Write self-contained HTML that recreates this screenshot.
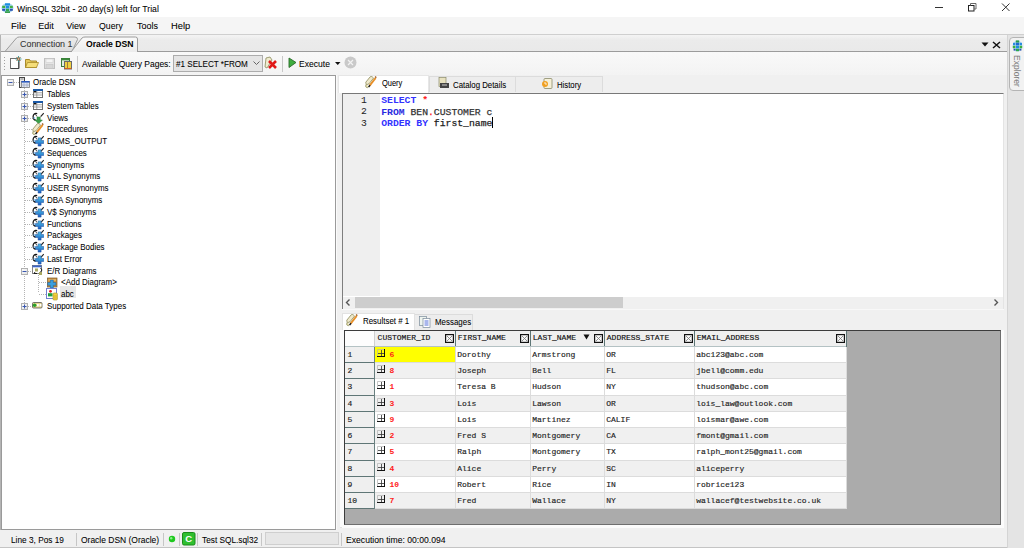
<!DOCTYPE html>
<html><head><meta charset="utf-8">
<style>
*{box-sizing:border-box;margin:0;padding:0}
html,body{width:1024px;height:548px;overflow:hidden;background:#f0f0f0;font-family:"Liberation Sans",sans-serif;color:#000;position:relative}
.a{position:absolute;display:block}
.t{position:absolute;white-space:pre}
</style></head><body>
<div class="a" style="left:0px;top:0px;width:1024px;height:17px;background:#fff"></div>
<div class="a" style="left:0px;top:17px;width:1024px;height:17px;background:#f5f5f5"></div>
<div class="a" style="left:0px;top:34px;width:1024px;height:1px;background:#cfcfcf"></div>
<div class="a" style="left:0px;top:35px;width:1007px;height:17px;background:linear-gradient(#f4f4f4,#ebebeb 30%,#e9e9e9)"></div>
<div class="a" style="left:0px;top:35px;width:1px;height:495px;background:#b4b4b4"></div>
<div class="a" style="left:1px;top:52px;width:1006px;height:23px;background:linear-gradient(#f9f9f9,#f3f3f3)"></div>
<div class="a" style="left:1007px;top:35px;width:17px;height:513px;background:#e4e4e4;border-left:1px solid #d4d4d4"></div>
<div class="a" style="left:1px;top:75px;width:335px;height:455px;background:#fff;border:1px solid #9a9a9a;border-left-width:1px"></div>
<div class="a" style="left:336px;top:75px;width:671px;height:455px;background:#f0f0f0"></div>
<div class="a" style="left:0px;top:530px;width:1007px;height:18px;background:#f0f0f0;border-bottom:1px solid #c4c4c4"></div>
<svg class="a" style="left:1px;top:3px" width="13" height="10" viewBox="0 0 13 10"><ellipse cx="6.5" cy="5" rx="6" ry="4.8" fill="#a8d4f0"/><rect x="4" y="0.3" width="5" height="2.2" fill="#1e8fe0"/><rect x="1.2" y="2.8" width="3" height="2.2" fill="#42b042"/><rect x="5" y="2.8" width="3" height="2.6" fill="#1e8fe0"/><rect x="8.8" y="2.8" width="3" height="2.2" fill="#42b042"/><rect x="1.2" y="5.8" width="3" height="2" fill="#2a52b0"/><rect x="5" y="5.8" width="3" height="2.2" fill="#2ea84a"/><rect x="8.8" y="5.8" width="3" height="2" fill="#2a52b0"/><rect x="4" y="8.3" width="5" height="1.6" fill="#2a9a40"/></svg>
<div class="t" style="left:17.22px;top:3px;font-size:9px;line-height:12px;color:#000;font-weight:normal;font-family:'Liberation Sans';transform:scaleX(0.96);transform-origin:0 0;-webkit-text-stroke:0.06px #000;">WinSQL 32bit - 20 day(s) left for Trial</div>
<div class="a" style="left:935px;top:7px;width:8px;height:1px;background:#333"></div>
<svg class="a" style="left:967px;top:2px" width="11" height="10" viewBox="0 0 11 10"><rect x="1.5" y="3.5" width="5.5" height="5.5" fill="none" stroke="#222" stroke-width="1"/><path d="M3.5 3.5V1.5h5.5v5.5h-2" fill="none" stroke="#666" stroke-width="1"/></svg>
<svg class="a" style="left:1001px;top:3px" width="10" height="9" viewBox="0 0 10 9"><path d="M1 0.5L8.5 8M8.5 0.5L1 8" stroke="#333" stroke-width="1"/></svg>
<div class="t" style="left:10.96px;top:20px;font-size:9px;line-height:12px;color:#000;font-weight:normal;font-family:'Liberation Sans';transform:scaleX(1.06);transform-origin:0 0;-webkit-text-stroke:0.06px #000;">File</div>
<div class="t" style="left:38.30px;top:20px;font-size:9px;line-height:12px;color:#000;font-weight:normal;font-family:'Liberation Sans';-webkit-text-stroke:0.06px #000;">Edit</div>
<div class="t" style="left:66.20px;top:20px;font-size:9px;line-height:12px;color:#000;font-weight:normal;font-family:'Liberation Sans';-webkit-text-stroke:0.06px #000;">View</div>
<div class="t" style="left:99.02px;top:20px;font-size:9px;line-height:12px;color:#000;font-weight:normal;font-family:'Liberation Sans';transform:scaleX(0.97);transform-origin:0 0;-webkit-text-stroke:0.06px #000;">Query</div>
<div class="t" style="left:136.90px;top:20px;font-size:9px;line-height:12px;color:#000;font-weight:normal;font-family:'Liberation Sans';-webkit-text-stroke:0.06px #000;">Tools</div>
<div class="t" style="left:170.98px;top:20px;font-size:9px;line-height:12px;color:#000;font-weight:normal;font-family:'Liberation Sans';transform:scaleX(1.04);transform-origin:0 0;-webkit-text-stroke:0.06px #000;">Help</div>
<svg class="a" style="left:0px;top:35px" width="145" height="17" viewBox="0 0 145 17"><defs><linearGradient id="g1" x1="0" y1="0" x2="0" y2="1"><stop offset="0" stop-color="#ececec"/><stop offset="1" stop-color="#dcdcdc"/></linearGradient><linearGradient id="g2" x1="0" y1="0" x2="0" y2="1"><stop offset="0" stop-color="#fafafa"/><stop offset="1" stop-color="#ececec"/></linearGradient></defs><path d="M5 16.5 L16.5 3 Q17.5 2 19.5 2 L75 2 Q77.5 2 77.5 4.5 L72 16.5 Z" fill="url(#g1)" stroke="#9c9c9c" stroke-width="1"/><path d="M71 17 L82 3 Q83 2 85 2 L135.5 2 Q137.5 2 137.5 4 L137.5 17" fill="url(#g2)" stroke="#9c9c9c" stroke-width="1"/></svg>
<div class="a" style="left:1px;top:51px;width:71px;height:1px;background:#9c9c9c"></div>
<div class="a" style="left:138px;top:51px;width:869px;height:1px;background:#9c9c9c"></div>
<div class="t" style="left:20.21px;top:38px;font-size:9px;line-height:12px;color:#333;font-weight:normal;font-family:'Liberation Sans';transform:scaleX(0.99);transform-origin:0 0;-webkit-text-stroke:0.06px #333;">Connection 1</div>
<div class="t" style="left:86.22px;top:38px;font-size:9px;line-height:12px;color:#000;font-weight:bold;font-family:'Liberation Sans';transform:scaleX(0.96);transform-origin:0 0;">Oracle DSN</div>
<svg class="a" style="left:981px;top:42px" width="8" height="5" viewBox="0 0 8 5"><path d="M0.5 0.5h7l-3.5 4z" fill="#111"/></svg>
<svg class="a" style="left:992px;top:41px" width="9" height="8" viewBox="0 0 9 8"><path d="M1 1L8 7M8 1L1 7" stroke="#111" stroke-width="1.5"/></svg>
<svg class="a" style="left:1008px;top:37px" width="16" height="54" viewBox="0 0 16 54"><path d="M16 0.5H5Q1.5 0.5 1.5 4V50Q1.5 53.5 5 53.5H16" fill="#f2f2f2" stroke="#b4b4b4"/></svg>
<svg class="a" style="left:1012px;top:40px" width="11" height="12" viewBox="0 0 11 12"><ellipse cx="5.5" cy="6" rx="4.8" ry="5.6" fill="#b8dcf0"/><rect x="3.8" y="0.4" width="3.4" height="2.2" fill="#2a9a50"/><rect x="1" y="2.8" width="2.4" height="2.4" fill="#2a8ae0"/><rect x="4" y="2.8" width="3" height="2.6" fill="#1e6ad0"/><rect x="7.6" y="2.8" width="2.4" height="2.4" fill="#2a8ae0"/><rect x="0.8" y="5.8" width="2.6" height="2.4" fill="#3ab040"/><rect x="4" y="5.8" width="3" height="2.6" fill="#1e8fe0"/><rect x="7.6" y="5.8" width="2.6" height="2.4" fill="#3ab040"/><rect x="1.6" y="8.8" width="2" height="1.8" fill="#2a52b0"/><rect x="4" y="8.8" width="3" height="2.4" fill="#2ea84a"/><rect x="7.4" y="8.8" width="2" height="1.8" fill="#2a52b0"/></svg>
<div class="t" style="left:1022px;top:55px;font-size:9px;line-height:10px;color:#7a7a7a;transform-origin:0 0;transform:rotate(90deg) scaleX(0.95)">Explorer</div>
<div class="a" style="left:4px;top:57px;width:1px;height:1px;background:#a0a0a0"></div>
<div class="a" style="left:4px;top:60px;width:1px;height:1px;background:#a0a0a0"></div>
<div class="a" style="left:4px;top:63px;width:1px;height:1px;background:#a0a0a0"></div>
<div class="a" style="left:4px;top:66px;width:1px;height:1px;background:#a0a0a0"></div>
<div class="a" style="left:4px;top:69px;width:1px;height:1px;background:#a0a0a0"></div>
<svg class="a" style="left:9px;top:55px" width="14" height="15" viewBox="0 0 14 15"><rect x="1.5" y="3.5" width="8" height="10" fill="#fff" stroke="#707070"/><path d="M2 13.5h8v-9" fill="none" stroke="#444" stroke-width="1"/><path d="M9.5 1v6M6.5 4h6" stroke="#2a9a9a" stroke-width="0.9"/><path d="M7.5 2l4 4M11.5 2l-4 4" stroke="#6a4a2a" stroke-width="0.9"/><circle cx="9.5" cy="4" r="1.4" fill="#a07040"/><circle cx="9.5" cy="4" r="0.6" fill="#fff"/></svg>
<svg class="a" style="left:25px;top:58px" width="14" height="10" viewBox="0 0 14 10"><path d="M0.5 1.5h4l1 1.5h6v6.5h-11z" fill="#e6c85a" stroke="#a88a2a"/><path d="M2.5 4.5h11l-2 5h-11z" fill="#f5de7a" stroke="#a88a2a" stroke-width="0.8"/></svg>
<svg class="a" style="left:44px;top:58px" width="11" height="11" viewBox="0 0 11 11"><rect x="0.5" y="0.5" width="10" height="10" fill="#e4e4e4" stroke="#c0c0c0"/><rect x="2" y="1" width="7" height="3.5" fill="#f4f4f4" stroke="#d0d0d0" stroke-width="0.6"/><rect x="2" y="6.5" width="7" height="4" fill="#d6d6d6" stroke="#c4c4c4" stroke-width="0.6"/></svg>
<svg class="a" style="left:60px;top:57px" width="13" height="13" viewBox="0 0 13 13"><rect x="1.5" y="1.5" width="8" height="8" fill="#dfeedc" stroke="#3a7a3a"/><rect x="1.5" y="1.5" width="8" height="1.8" fill="#3a8a3a"/><rect x="4.5" y="4.5" width="7" height="7.5" fill="#f0d040" stroke="#6a6a6a"/><path d="M7.5 5v7" stroke="#8a6a3a" stroke-width="0.8"/><rect x="4.5" y="11" width="7" height="1" fill="#d06020"/></svg>
<div class="a" style="left:77px;top:56px;width:1px;height:16px;background:#c8c8c8"></div>
<div class="t" style="left:82.03px;top:58px;font-size:9px;line-height:12px;color:#000;font-weight:normal;font-family:'Liberation Sans';transform:scaleX(0.945);transform-origin:0 0;-webkit-text-stroke:0.06px #000;">Available Query Pages:</div>
<div class="a" style="left:173px;top:55px;width:90px;height:17px;background:#e5e5e5;border:1px solid #acacac"></div>
<div class="t" style="left:175.66px;top:58px;font-size:9px;line-height:12px;color:#000;font-weight:normal;font-family:'Liberation Sans';transform:scaleX(0.9);transform-origin:0 0;-webkit-text-stroke:0.06px #000;">#1 SELECT *FROM</div>
<svg class="a" style="left:253px;top:61px" width="7" height="5" viewBox="0 0 7 5"><path d="M0.5 0.5L3.5 3.5L6.5 0.5" fill="none" stroke="#666" stroke-width="1"/></svg>
<svg class="a" style="left:264px;top:56px" width="14" height="13" viewBox="0 0 14 13"><path d="M2 2l4 -1l2 3l-5 8l-2 -1z" fill="#f0ecd0" stroke="#8a8a5a" stroke-width="0.8"/><path d="M5 5l7 7M12 5l-7 7" stroke="#e01818" stroke-width="2.6"/></svg>
<div class="a" style="left:282px;top:56px;width:1px;height:16px;background:#c8c8c8"></div>
<svg class="a" style="left:288px;top:57px" width="9" height="12" viewBox="0 0 9 12"><path d="M1 1L8 5.5L1 10.5Z" fill="#3fae3f" stroke="#2a6a2a" stroke-width="0.9"/></svg>
<div class="t" style="left:299.23px;top:58px;font-size:9px;line-height:12px;color:#000;font-weight:normal;font-family:'Liberation Sans';transform:scaleX(0.95);transform-origin:0 0;-webkit-text-stroke:0.06px #000;">Execute</div>
<svg class="a" style="left:335px;top:62px" width="6" height="4" viewBox="0 0 6 4"><path d="M0 0h5.5l-2.75 3z" fill="#111"/></svg>
<svg class="a" style="left:344px;top:56px" width="13" height="13" viewBox="0 0 13 13"><circle cx="6.5" cy="6.5" r="6" fill="#c9c9c9"/><path d="M4 4l5 5M9 4l-5 5" stroke="#f2f2f2" stroke-width="1.2"/></svg>
<div class="a" style="left:24px;top:88px;width:1px;height:217px;background:repeating-linear-gradient(180deg,#b4b4b4 0 1px,transparent 1px 2px)"></div>
<div class="a" style="left:38px;top:275px;width:1px;height:18px;background:repeating-linear-gradient(180deg,#b4b4b4 0 1px,transparent 1px 2px)"></div>
<svg class="a" style="left:7px;top:79px" width="7" height="7" viewBox="0 0 7 7"><defs><linearGradient id="bx" x1="0" y1="0" x2="1" y2="1"><stop offset="0" stop-color="#fdfdfd"/><stop offset="1" stop-color="#e2e2e2"/></linearGradient></defs><rect x="0.5" y="0.5" width="6" height="6" fill="url(#bx)" stroke="#b0b0b0"/><path d="M1.5 3.5h4" stroke="#3a58b0" stroke-width="1"/></svg>
<div class="a" style="left:14px;top:82px;width:5px;height:1px;background:repeating-linear-gradient(90deg,#b4b4b4 0 1px,transparent 1px 2px)"></div>
<svg class="a" style="left:19px;top:77px" width="11" height="12" viewBox="0 0 11 12"><rect x="0.5" y="0.5" width="5" height="10" fill="#e8e8e8" stroke="#444" stroke-width="1"/><rect x="1.5" y="1.5" width="3" height="1" fill="#888"/><rect x="2.5" y="4.5" width="8" height="6" fill="#dfe6f2" stroke="#777" stroke-width="0.8"/><rect x="2.5" y="4" width="8" height="1.6" fill="#2a58c0"/><path d="M2.5 8h8M5 5.5v5M8 5.5v5" stroke="#98a0c0" stroke-width="0.7"/></svg>
<div class="t" style="left:33.27px;top:76px;font-size:9px;line-height:12px;color:#000;font-weight:normal;font-family:'Liberation Sans';transform:scaleX(0.885);transform-origin:0 0;-webkit-text-stroke:0.06px #000;">Oracle DSN</div>
<svg class="a" style="left:21px;top:91px" width="7" height="7" viewBox="0 0 7 7"><defs><linearGradient id="bx" x1="0" y1="0" x2="1" y2="1"><stop offset="0" stop-color="#fdfdfd"/><stop offset="1" stop-color="#e2e2e2"/></linearGradient></defs><rect x="0.5" y="0.5" width="6" height="6" fill="url(#bx)" stroke="#b0b0b0"/><path d="M1.5 3.5h4" stroke="#3a58b0" stroke-width="1"/><path d="M3.5 1.5v4" stroke="#3a58b0" stroke-width="1"/></svg>
<div class="a" style="left:28px;top:94px;width:5px;height:1px;background:repeating-linear-gradient(90deg,#b4b4b4 0 1px,transparent 1px 2px)"></div>
<svg class="a" style="left:32px;top:88px" width="12" height="13" viewBox="0 0 12 13"><g transform="translate(1,1)"><rect x="0.5" y="0.5" width="9" height="8" fill="#fff" stroke="#707070" stroke-width="1"/><rect x="0" y="0" width="10" height="2" fill="#1c5aa8"/><rect x="1" y="2" width="2.5" height="1.5" fill="#111"/><path d="M1 3.8h8M1 6h8M3.8 2v6" stroke="#8a8a8a" stroke-width="0.8"/></g></svg>
<div class="t" style="left:47.47px;top:88px;font-size:9px;line-height:12px;color:#000;font-weight:normal;font-family:'Liberation Sans';transform:scaleX(0.885);transform-origin:0 0;-webkit-text-stroke:0.06px #000;">Tables</div>
<svg class="a" style="left:21px;top:103px" width="7" height="7" viewBox="0 0 7 7"><defs><linearGradient id="bx" x1="0" y1="0" x2="1" y2="1"><stop offset="0" stop-color="#fdfdfd"/><stop offset="1" stop-color="#e2e2e2"/></linearGradient></defs><rect x="0.5" y="0.5" width="6" height="6" fill="url(#bx)" stroke="#b0b0b0"/><path d="M1.5 3.5h4" stroke="#3a58b0" stroke-width="1"/><path d="M3.5 1.5v4" stroke="#3a58b0" stroke-width="1"/></svg>
<div class="a" style="left:28px;top:106px;width:5px;height:1px;background:repeating-linear-gradient(90deg,#b4b4b4 0 1px,transparent 1px 2px)"></div>
<svg class="a" style="left:32px;top:100px" width="12" height="13" viewBox="0 0 12 13"><g transform="translate(1,1)"><rect x="0.5" y="0.5" width="9" height="8" fill="#fff" stroke="#707070" stroke-width="1"/><rect x="0" y="0" width="10" height="2" fill="#1c5aa8"/><rect x="1" y="2" width="2.5" height="1.5" fill="#111"/><path d="M1 3.8h8M1 6h8M3.8 2v6" stroke="#8a8a8a" stroke-width="0.8"/></g></svg>
<div class="t" style="left:47.47px;top:100px;font-size:9px;line-height:12px;color:#000;font-weight:normal;font-family:'Liberation Sans';transform:scaleX(0.885);transform-origin:0 0;-webkit-text-stroke:0.06px #000;">System Tables</div>
<svg class="a" style="left:21px;top:115px" width="7" height="7" viewBox="0 0 7 7"><defs><linearGradient id="bx" x1="0" y1="0" x2="1" y2="1"><stop offset="0" stop-color="#fdfdfd"/><stop offset="1" stop-color="#e2e2e2"/></linearGradient></defs><rect x="0.5" y="0.5" width="6" height="6" fill="url(#bx)" stroke="#b0b0b0"/><path d="M1.5 3.5h4" stroke="#3a58b0" stroke-width="1"/><path d="M3.5 1.5v4" stroke="#3a58b0" stroke-width="1"/></svg>
<div class="a" style="left:28px;top:118px;width:5px;height:1px;background:repeating-linear-gradient(90deg,#b4b4b4 0 1px,transparent 1px 2px)"></div>
<svg class="a" style="left:32px;top:112px" width="12" height="13" viewBox="0 0 12 13"><path d="M5.2 1.6Q1.4 0.8 1.1 4.4Q1 7.8 3.8 8.2" fill="none" stroke="#111" stroke-width="1.2"/><path d="M2.4 2.4Q4.6 2.2 5 4.6" fill="none" stroke="#333" stroke-width="0.8"/><circle cx="2.3" cy="6" r="0.9" fill="#9ac8f0"/><path d="M11.8 1.2L8.6 4.6" stroke="#222" stroke-width="1.2"/><path d="M5 5h3.2v3h2.2l-3.8 3.8l-3.8-3.8h2.2z" fill="#3aa04a" stroke="#2a7a3a" stroke-width="0.5"/></svg>
<div class="t" style="left:47.47px;top:112px;font-size:9px;line-height:12px;color:#000;font-weight:normal;font-family:'Liberation Sans';transform:scaleX(0.885);transform-origin:0 0;-webkit-text-stroke:0.06px #000;">Views</div>
<div class="a" style="left:25px;top:129px;width:8px;height:1px;background:repeating-linear-gradient(90deg,#b4b4b4 0 1px,transparent 1px 2px)"></div>
<svg class="a" style="left:32px;top:123px" width="12" height="13" viewBox="0 0 12 13"><path d="M0.8 6.2L5.2 0.8Q6.2 0 7.2 0.8L8.6 2L4 7.8L1.2 8.8Z" fill="#efe9cc" stroke="#8c8a58" stroke-width="0.8"/><path d="M1.2 8.6L0.6 10.2Q1 11.8 2.6 11.6L3.8 10.6" fill="#e6dfb0" stroke="#8c8a58" stroke-width="0.8"/><path d="M4.6 9.6L10.6 2" stroke="#e8902a" stroke-width="2"/><path d="M10.2 1.6L11.2 0.6" stroke="#a05a20" stroke-width="1.6"/><path d="M3.6 11L5 9.2" stroke="#1a1a1a" stroke-width="1.4"/></svg>
<div class="t" style="left:47.47px;top:123px;font-size:9px;line-height:12px;color:#000;font-weight:normal;font-family:'Liberation Sans';transform:scaleX(0.885);transform-origin:0 0;-webkit-text-stroke:0.06px #000;">Procedures</div>
<div class="a" style="left:25px;top:141px;width:8px;height:1px;background:repeating-linear-gradient(90deg,#b4b4b4 0 1px,transparent 1px 2px)"></div>
<svg class="a" style="left:32px;top:135px" width="12" height="13" viewBox="0 0 12 13"><path d="M5.2 1.6Q1.4 0.8 1.1 4.4Q1 7.8 3.8 8.2" fill="none" stroke="#111" stroke-width="1.2"/><path d="M2.4 2.4Q4.6 2.2 5 4.6" fill="none" stroke="#333" stroke-width="0.8"/><circle cx="2.3" cy="6" r="0.9" fill="#9ac8f0"/><path d="M11.8 1.2L8.6 4.6" stroke="#222" stroke-width="1.2"/><defs><linearGradient id="pg" x1="0" y1="0" x2="0" y2="1"><stop offset="0" stop-color="#50c8e8"/><stop offset="1" stop-color="#1a58c0"/></linearGradient></defs><path d="M3.5 5.5h2.6v-2.6h3v2.6h2.6v3h-2.6v2.6h-3v-2.6h-2.6z" fill="url(#pg)" stroke="#1a4a9a" stroke-width="0.5"/></svg>
<div class="t" style="left:47.47px;top:135px;font-size:9px;line-height:12px;color:#000;font-weight:normal;font-family:'Liberation Sans';transform:scaleX(0.885);transform-origin:0 0;-webkit-text-stroke:0.06px #000;">DBMS_OUTPUT</div>
<div class="a" style="left:25px;top:153px;width:8px;height:1px;background:repeating-linear-gradient(90deg,#b4b4b4 0 1px,transparent 1px 2px)"></div>
<svg class="a" style="left:32px;top:147px" width="12" height="13" viewBox="0 0 12 13"><path d="M5.2 1.6Q1.4 0.8 1.1 4.4Q1 7.8 3.8 8.2" fill="none" stroke="#111" stroke-width="1.2"/><path d="M2.4 2.4Q4.6 2.2 5 4.6" fill="none" stroke="#333" stroke-width="0.8"/><circle cx="2.3" cy="6" r="0.9" fill="#9ac8f0"/><path d="M11.8 1.2L8.6 4.6" stroke="#222" stroke-width="1.2"/><defs><linearGradient id="pg" x1="0" y1="0" x2="0" y2="1"><stop offset="0" stop-color="#50c8e8"/><stop offset="1" stop-color="#1a58c0"/></linearGradient></defs><path d="M3.5 5.5h2.6v-2.6h3v2.6h2.6v3h-2.6v2.6h-3v-2.6h-2.6z" fill="url(#pg)" stroke="#1a4a9a" stroke-width="0.5"/></svg>
<div class="t" style="left:47.47px;top:147px;font-size:9px;line-height:12px;color:#000;font-weight:normal;font-family:'Liberation Sans';transform:scaleX(0.885);transform-origin:0 0;-webkit-text-stroke:0.06px #000;">Sequences</div>
<div class="a" style="left:25px;top:165px;width:8px;height:1px;background:repeating-linear-gradient(90deg,#b4b4b4 0 1px,transparent 1px 2px)"></div>
<svg class="a" style="left:32px;top:159px" width="12" height="13" viewBox="0 0 12 13"><path d="M5.2 1.6Q1.4 0.8 1.1 4.4Q1 7.8 3.8 8.2" fill="none" stroke="#111" stroke-width="1.2"/><path d="M2.4 2.4Q4.6 2.2 5 4.6" fill="none" stroke="#333" stroke-width="0.8"/><circle cx="2.3" cy="6" r="0.9" fill="#9ac8f0"/><path d="M11.8 1.2L8.6 4.6" stroke="#222" stroke-width="1.2"/><defs><linearGradient id="pg" x1="0" y1="0" x2="0" y2="1"><stop offset="0" stop-color="#50c8e8"/><stop offset="1" stop-color="#1a58c0"/></linearGradient></defs><path d="M3.5 5.5h2.6v-2.6h3v2.6h2.6v3h-2.6v2.6h-3v-2.6h-2.6z" fill="url(#pg)" stroke="#1a4a9a" stroke-width="0.5"/></svg>
<div class="t" style="left:47.47px;top:159px;font-size:9px;line-height:12px;color:#000;font-weight:normal;font-family:'Liberation Sans';transform:scaleX(0.885);transform-origin:0 0;-webkit-text-stroke:0.06px #000;">Synonyms</div>
<div class="a" style="left:25px;top:176px;width:8px;height:1px;background:repeating-linear-gradient(90deg,#b4b4b4 0 1px,transparent 1px 2px)"></div>
<svg class="a" style="left:32px;top:170px" width="12" height="13" viewBox="0 0 12 13"><path d="M5.2 1.6Q1.4 0.8 1.1 4.4Q1 7.8 3.8 8.2" fill="none" stroke="#111" stroke-width="1.2"/><path d="M2.4 2.4Q4.6 2.2 5 4.6" fill="none" stroke="#333" stroke-width="0.8"/><circle cx="2.3" cy="6" r="0.9" fill="#9ac8f0"/><path d="M11.8 1.2L8.6 4.6" stroke="#222" stroke-width="1.2"/><defs><linearGradient id="pg" x1="0" y1="0" x2="0" y2="1"><stop offset="0" stop-color="#50c8e8"/><stop offset="1" stop-color="#1a58c0"/></linearGradient></defs><path d="M3.5 5.5h2.6v-2.6h3v2.6h2.6v3h-2.6v2.6h-3v-2.6h-2.6z" fill="url(#pg)" stroke="#1a4a9a" stroke-width="0.5"/></svg>
<div class="t" style="left:47.47px;top:170px;font-size:9px;line-height:12px;color:#000;font-weight:normal;font-family:'Liberation Sans';transform:scaleX(0.885);transform-origin:0 0;-webkit-text-stroke:0.06px #000;">ALL Synonyms</div>
<div class="a" style="left:25px;top:188px;width:8px;height:1px;background:repeating-linear-gradient(90deg,#b4b4b4 0 1px,transparent 1px 2px)"></div>
<svg class="a" style="left:32px;top:182px" width="12" height="13" viewBox="0 0 12 13"><path d="M5.2 1.6Q1.4 0.8 1.1 4.4Q1 7.8 3.8 8.2" fill="none" stroke="#111" stroke-width="1.2"/><path d="M2.4 2.4Q4.6 2.2 5 4.6" fill="none" stroke="#333" stroke-width="0.8"/><circle cx="2.3" cy="6" r="0.9" fill="#9ac8f0"/><path d="M11.8 1.2L8.6 4.6" stroke="#222" stroke-width="1.2"/><defs><linearGradient id="pg" x1="0" y1="0" x2="0" y2="1"><stop offset="0" stop-color="#50c8e8"/><stop offset="1" stop-color="#1a58c0"/></linearGradient></defs><path d="M3.5 5.5h2.6v-2.6h3v2.6h2.6v3h-2.6v2.6h-3v-2.6h-2.6z" fill="url(#pg)" stroke="#1a4a9a" stroke-width="0.5"/></svg>
<div class="t" style="left:47.47px;top:182px;font-size:9px;line-height:12px;color:#000;font-weight:normal;font-family:'Liberation Sans';transform:scaleX(0.885);transform-origin:0 0;-webkit-text-stroke:0.06px #000;">USER Synonyms</div>
<div class="a" style="left:25px;top:200px;width:8px;height:1px;background:repeating-linear-gradient(90deg,#b4b4b4 0 1px,transparent 1px 2px)"></div>
<svg class="a" style="left:32px;top:194px" width="12" height="13" viewBox="0 0 12 13"><path d="M5.2 1.6Q1.4 0.8 1.1 4.4Q1 7.8 3.8 8.2" fill="none" stroke="#111" stroke-width="1.2"/><path d="M2.4 2.4Q4.6 2.2 5 4.6" fill="none" stroke="#333" stroke-width="0.8"/><circle cx="2.3" cy="6" r="0.9" fill="#9ac8f0"/><path d="M11.8 1.2L8.6 4.6" stroke="#222" stroke-width="1.2"/><defs><linearGradient id="pg" x1="0" y1="0" x2="0" y2="1"><stop offset="0" stop-color="#50c8e8"/><stop offset="1" stop-color="#1a58c0"/></linearGradient></defs><path d="M3.5 5.5h2.6v-2.6h3v2.6h2.6v3h-2.6v2.6h-3v-2.6h-2.6z" fill="url(#pg)" stroke="#1a4a9a" stroke-width="0.5"/></svg>
<div class="t" style="left:47.47px;top:194px;font-size:9px;line-height:12px;color:#000;font-weight:normal;font-family:'Liberation Sans';transform:scaleX(0.885);transform-origin:0 0;-webkit-text-stroke:0.06px #000;">DBA Synonyms</div>
<div class="a" style="left:25px;top:212px;width:8px;height:1px;background:repeating-linear-gradient(90deg,#b4b4b4 0 1px,transparent 1px 2px)"></div>
<svg class="a" style="left:32px;top:206px" width="12" height="13" viewBox="0 0 12 13"><path d="M5.2 1.6Q1.4 0.8 1.1 4.4Q1 7.8 3.8 8.2" fill="none" stroke="#111" stroke-width="1.2"/><path d="M2.4 2.4Q4.6 2.2 5 4.6" fill="none" stroke="#333" stroke-width="0.8"/><circle cx="2.3" cy="6" r="0.9" fill="#9ac8f0"/><path d="M11.8 1.2L8.6 4.6" stroke="#222" stroke-width="1.2"/><defs><linearGradient id="pg" x1="0" y1="0" x2="0" y2="1"><stop offset="0" stop-color="#50c8e8"/><stop offset="1" stop-color="#1a58c0"/></linearGradient></defs><path d="M3.5 5.5h2.6v-2.6h3v2.6h2.6v3h-2.6v2.6h-3v-2.6h-2.6z" fill="url(#pg)" stroke="#1a4a9a" stroke-width="0.5"/></svg>
<div class="t" style="left:47.47px;top:206px;font-size:9px;line-height:12px;color:#000;font-weight:normal;font-family:'Liberation Sans';transform:scaleX(0.885);transform-origin:0 0;-webkit-text-stroke:0.06px #000;">V$ Synonyms</div>
<div class="a" style="left:25px;top:224px;width:8px;height:1px;background:repeating-linear-gradient(90deg,#b4b4b4 0 1px,transparent 1px 2px)"></div>
<svg class="a" style="left:32px;top:218px" width="12" height="13" viewBox="0 0 12 13"><path d="M5.2 1.6Q1.4 0.8 1.1 4.4Q1 7.8 3.8 8.2" fill="none" stroke="#111" stroke-width="1.2"/><path d="M2.4 2.4Q4.6 2.2 5 4.6" fill="none" stroke="#333" stroke-width="0.8"/><circle cx="2.3" cy="6" r="0.9" fill="#9ac8f0"/><path d="M11.8 1.2L8.6 4.6" stroke="#222" stroke-width="1.2"/><defs><linearGradient id="pg" x1="0" y1="0" x2="0" y2="1"><stop offset="0" stop-color="#50c8e8"/><stop offset="1" stop-color="#1a58c0"/></linearGradient></defs><path d="M3.5 5.5h2.6v-2.6h3v2.6h2.6v3h-2.6v2.6h-3v-2.6h-2.6z" fill="url(#pg)" stroke="#1a4a9a" stroke-width="0.5"/></svg>
<div class="t" style="left:47.47px;top:218px;font-size:9px;line-height:12px;color:#000;font-weight:normal;font-family:'Liberation Sans';transform:scaleX(0.885);transform-origin:0 0;-webkit-text-stroke:0.06px #000;">Functions</div>
<div class="a" style="left:25px;top:235px;width:8px;height:1px;background:repeating-linear-gradient(90deg,#b4b4b4 0 1px,transparent 1px 2px)"></div>
<svg class="a" style="left:32px;top:229px" width="12" height="13" viewBox="0 0 12 13"><path d="M5.2 1.6Q1.4 0.8 1.1 4.4Q1 7.8 3.8 8.2" fill="none" stroke="#111" stroke-width="1.2"/><path d="M2.4 2.4Q4.6 2.2 5 4.6" fill="none" stroke="#333" stroke-width="0.8"/><circle cx="2.3" cy="6" r="0.9" fill="#9ac8f0"/><path d="M11.8 1.2L8.6 4.6" stroke="#222" stroke-width="1.2"/><defs><linearGradient id="pg" x1="0" y1="0" x2="0" y2="1"><stop offset="0" stop-color="#50c8e8"/><stop offset="1" stop-color="#1a58c0"/></linearGradient></defs><path d="M3.5 5.5h2.6v-2.6h3v2.6h2.6v3h-2.6v2.6h-3v-2.6h-2.6z" fill="url(#pg)" stroke="#1a4a9a" stroke-width="0.5"/></svg>
<div class="t" style="left:47.47px;top:229px;font-size:9px;line-height:12px;color:#000;font-weight:normal;font-family:'Liberation Sans';transform:scaleX(0.885);transform-origin:0 0;-webkit-text-stroke:0.06px #000;">Packages</div>
<div class="a" style="left:25px;top:247px;width:8px;height:1px;background:repeating-linear-gradient(90deg,#b4b4b4 0 1px,transparent 1px 2px)"></div>
<svg class="a" style="left:32px;top:241px" width="12" height="13" viewBox="0 0 12 13"><path d="M5.2 1.6Q1.4 0.8 1.1 4.4Q1 7.8 3.8 8.2" fill="none" stroke="#111" stroke-width="1.2"/><path d="M2.4 2.4Q4.6 2.2 5 4.6" fill="none" stroke="#333" stroke-width="0.8"/><circle cx="2.3" cy="6" r="0.9" fill="#9ac8f0"/><path d="M11.8 1.2L8.6 4.6" stroke="#222" stroke-width="1.2"/><defs><linearGradient id="pg" x1="0" y1="0" x2="0" y2="1"><stop offset="0" stop-color="#50c8e8"/><stop offset="1" stop-color="#1a58c0"/></linearGradient></defs><path d="M3.5 5.5h2.6v-2.6h3v2.6h2.6v3h-2.6v2.6h-3v-2.6h-2.6z" fill="url(#pg)" stroke="#1a4a9a" stroke-width="0.5"/></svg>
<div class="t" style="left:47.47px;top:241px;font-size:9px;line-height:12px;color:#000;font-weight:normal;font-family:'Liberation Sans';transform:scaleX(0.885);transform-origin:0 0;-webkit-text-stroke:0.06px #000;">Package Bodies</div>
<div class="a" style="left:25px;top:259px;width:8px;height:1px;background:repeating-linear-gradient(90deg,#b4b4b4 0 1px,transparent 1px 2px)"></div>
<svg class="a" style="left:32px;top:253px" width="12" height="13" viewBox="0 0 12 13"><path d="M5.2 1.6Q1.4 0.8 1.1 4.4Q1 7.8 3.8 8.2" fill="none" stroke="#111" stroke-width="1.2"/><path d="M2.4 2.4Q4.6 2.2 5 4.6" fill="none" stroke="#333" stroke-width="0.8"/><circle cx="2.3" cy="6" r="0.9" fill="#9ac8f0"/><path d="M11.8 1.2L8.6 4.6" stroke="#222" stroke-width="1.2"/><defs><linearGradient id="pg" x1="0" y1="0" x2="0" y2="1"><stop offset="0" stop-color="#50c8e8"/><stop offset="1" stop-color="#1a58c0"/></linearGradient></defs><path d="M3.5 5.5h2.6v-2.6h3v2.6h2.6v3h-2.6v2.6h-3v-2.6h-2.6z" fill="url(#pg)" stroke="#1a4a9a" stroke-width="0.5"/></svg>
<div class="t" style="left:47.47px;top:253px;font-size:9px;line-height:12px;color:#000;font-weight:normal;font-family:'Liberation Sans';transform:scaleX(0.885);transform-origin:0 0;-webkit-text-stroke:0.06px #000;">Last Error</div>
<svg class="a" style="left:21px;top:268px" width="7" height="7" viewBox="0 0 7 7"><defs><linearGradient id="bx" x1="0" y1="0" x2="1" y2="1"><stop offset="0" stop-color="#fdfdfd"/><stop offset="1" stop-color="#e2e2e2"/></linearGradient></defs><rect x="0.5" y="0.5" width="6" height="6" fill="url(#bx)" stroke="#b0b0b0"/><path d="M1.5 3.5h4" stroke="#3a58b0" stroke-width="1"/></svg>
<div class="a" style="left:28px;top:271px;width:5px;height:1px;background:repeating-linear-gradient(90deg,#b4b4b4 0 1px,transparent 1px 2px)"></div>
<svg class="a" style="left:32px;top:265px" width="12" height="13" viewBox="0 0 12 13"><rect x="0.5" y="0.5" width="9" height="8" fill="#fff" stroke="#666" stroke-width="0.8"/><rect x="0.5" y="0.5" width="9" height="1.8" fill="#3a64c8"/><rect x="3" y="3.5" width="3" height="3" fill="#a8a860"/><rect x="7" y="7" width="3" height="3" fill="#a8a860"/><path d="M8.5 3l1.5 2l-1.5 2M3 7l-1 1.5l3 0" fill="none" stroke="#111" stroke-width="0.9"/></svg>
<div class="t" style="left:47.47px;top:265px;font-size:9px;line-height:12px;color:#000;font-weight:normal;font-family:'Liberation Sans';transform:scaleX(0.885);transform-origin:0 0;-webkit-text-stroke:0.06px #000;">E/R Diagrams</div>
<div class="a" style="left:39px;top:282px;width:8px;height:1px;background:repeating-linear-gradient(90deg,#b4b4b4 0 1px,transparent 1px 2px)"></div>
<svg class="a" style="left:46px;top:276px" width="13" height="13" viewBox="0 0 13 13"><g transform="translate(0.5,1.5)"><rect x="1" y="0.5" width="9.5" height="9" fill="#c89040" stroke="#7a5a2a" stroke-width="0.7"/><rect x="2" y="1.5" width="7.5" height="2" fill="#e0b060"/><path d="M1.2 5h2.6v-2.4h3v2.4h2.6v2.8h-2.6v2.6h-3v-2.6h-2.6z" fill="#3aa0e0" stroke="#1a5a9a" stroke-width="0.5"/></g></svg>
<div class="t" style="left:60.97px;top:276px;font-size:9px;line-height:12px;color:#000;font-weight:normal;font-family:'Liberation Sans';transform:scaleX(0.885);transform-origin:0 0;-webkit-text-stroke:0.06px #000;">&lt;Add Diagram&gt;</div>
<div class="a" style="left:39px;top:294px;width:8px;height:1px;background:repeating-linear-gradient(90deg,#b4b4b4 0 1px,transparent 1px 2px)"></div>
<svg class="a" style="left:46px;top:288px" width="13" height="13" viewBox="0 0 13 13"><rect x="0.5" y="0.5" width="10" height="10" fill="#fff" stroke="#7080d0" stroke-width="1"/><circle cx="4.5" cy="3.3" r="1.4" fill="#e02020"/><rect x="2" y="5.2" width="4.5" height="3.2" fill="#20a040"/><rect x="7" y="5" width="4.4" height="7" rx="1" fill="#f2d040" stroke="#a89020" stroke-width="0.6"/><path d="M7.8 8h3M7.8 10h3" stroke="#c8a020" stroke-width="0.6"/></svg>
<div class="a" style="left:60px;top:286px;width:16px;height:12px;background:#e8e8e8"></div>
<div class="t" style="left:60.97px;top:288px;font-size:9px;line-height:12px;color:#000;font-weight:normal;font-family:'Liberation Sans';transform:scaleX(0.885);transform-origin:0 0;-webkit-text-stroke:0.06px #000;">abc</div>
<svg class="a" style="left:21px;top:303px" width="7" height="7" viewBox="0 0 7 7"><defs><linearGradient id="bx" x1="0" y1="0" x2="1" y2="1"><stop offset="0" stop-color="#fdfdfd"/><stop offset="1" stop-color="#e2e2e2"/></linearGradient></defs><rect x="0.5" y="0.5" width="6" height="6" fill="url(#bx)" stroke="#b0b0b0"/><path d="M1.5 3.5h4" stroke="#3a58b0" stroke-width="1"/><path d="M3.5 1.5v4" stroke="#3a58b0" stroke-width="1"/></svg>
<div class="a" style="left:28px;top:306px;width:5px;height:1px;background:repeating-linear-gradient(90deg,#b4b4b4 0 1px,transparent 1px 2px)"></div>
<svg class="a" style="left:32px;top:300px" width="12" height="13" viewBox="0 0 12 13"><g transform="translate(0,2)"><rect x="0.5" y="0.5" width="9.5" height="5.5" rx="1" fill="#e8d890" stroke="#555" stroke-width="0.8"/><circle cx="2.6" cy="3.2" r="1.8" fill="#2aa02a"/><rect x="5" y="2" width="1.8" height="2.4" fill="#fff"/><rect x="7.6" y="2" width="1.8" height="2.4" fill="#fff"/></g></svg>
<div class="t" style="left:47.47px;top:300px;font-size:9px;line-height:12px;color:#000;font-weight:normal;font-family:'Liberation Sans';transform:scaleX(0.885);transform-origin:0 0;-webkit-text-stroke:0.06px #000;">Supported Data Types</div>
<div class="a" style="left:338px;top:75px;width:91px;height:18px;background:#fff;border:1px solid #e6e6e6;border-bottom:none"></div>
<div class="a" style="left:429px;top:76px;width:87px;height:16px;background:#ededed;border:1px solid #dcdcdc;border-bottom:none"></div>
<div class="a" style="left:516px;top:76px;width:87px;height:16px;background:#ededed;border:1px solid #dcdcdc;border-bottom:none;border-left:none"></div>
<svg class="a" style="left:365px;top:76px" width="13" height="13" viewBox="0 0 13 13"><path d="M0.8 6.2L5.2 0.8Q6.2 0 7.2 0.8L8.6 2L4 7.8L1.2 8.8Z" fill="#efe9cc" stroke="#8c8a58" stroke-width="0.8"/><path d="M1.2 8.6L0.6 10.2Q1 11.8 2.6 11.6L3.8 10.6" fill="#e6dfb0" stroke="#8c8a58" stroke-width="0.8"/><path d="M4.6 9.6L10.6 2" stroke="#e8902a" stroke-width="2"/><path d="M10.2 1.6L11.2 0.6" stroke="#a05a20" stroke-width="1.6"/><path d="M3.6 11L5 9.2" stroke="#1a1a1a" stroke-width="1.4"/></svg>
<div class="t" style="left:381.50px;top:77px;font-size:9px;line-height:12px;color:#000;font-weight:normal;font-family:'Liberation Sans';transform:scaleX(0.83);transform-origin:0 0;-webkit-text-stroke:0.06px #000;">Query</div>
<svg class="a" style="left:438px;top:77px" width="13" height="12" viewBox="0 0 13 12"><rect x="1" y="0.5" width="7" height="9" fill="#e8e2c0" stroke="#8a8a6a" stroke-width="0.7"/><rect x="2" y="6" width="9" height="5" fill="#444"/><rect x="4" y="7.5" width="5" height="1" fill="#ccc"/></svg>
<div class="t" style="left:453.48px;top:79px;font-size:9px;line-height:12px;color:#000;font-weight:normal;font-family:'Liberation Sans';transform:scaleX(0.87);transform-origin:0 0;-webkit-text-stroke:0.06px #000;">Catalog Details</div>
<svg class="a" style="left:541px;top:78px" width="13" height="12" viewBox="0 0 13 12"><rect x="3" y="0.5" width="8" height="10" rx="1" fill="#f6f0d8" stroke="#8a8a6a" stroke-width="0.8"/><circle cx="4" cy="6" r="3" fill="#f0a020"/><path d="M4 4v2h2" stroke="#fff" stroke-width="0.8" fill="none"/></svg>
<div class="t" style="left:557.28px;top:79px;font-size:9px;line-height:12px;color:#000;font-weight:normal;font-family:'Liberation Sans';transform:scaleX(0.86);transform-origin:0 0;-webkit-text-stroke:0.06px #000;">History</div>
<div class="a" style="left:342px;top:93px;width:662px;height:216px;background:#fff;border-top:1px solid #787878;border-left:1px solid #7e7e7e;border-right:1px solid #e4e4e4"></div>
<div class="a" style="left:343px;top:94px;width:37px;height:202px;background:#efefef"></div>
<div class="t" style="left:361.00px;top:95px;font-size:9.75px;line-height:12px;color:#222;font-weight:normal;font-family:'Liberation Mono';-webkit-text-stroke:0.15px #222;-webkit-text-stroke:0">1</div>
<div class="t" style="left:361.00px;top:106px;font-size:9.75px;line-height:12px;color:#222;font-weight:normal;font-family:'Liberation Mono';-webkit-text-stroke:0.15px #222;-webkit-text-stroke:0">2</div>
<div class="t" style="left:361.00px;top:118px;font-size:9.75px;line-height:12px;color:#222;font-weight:normal;font-family:'Liberation Mono';-webkit-text-stroke:0.15px #222;-webkit-text-stroke:0">3</div>
<div class="t" style="left:381.2px;top:95px;font-size:9.75px;line-height:12px;font-family:'Liberation Mono'"><span style="color:#3333ff;font-weight:bold;-webkit-text-stroke:0px #3333ff">SELECT</span><span style="color:#000;font-weight:normal;-webkit-text-stroke:0.25px #000"> </span><span style="color:#ff2020;font-weight:bold;-webkit-text-stroke:0px #ff2020">*</span></div>
<div class="t" style="left:381.2px;top:107px;font-size:9.75px;line-height:12px;font-family:'Liberation Mono'"><span style="color:#2a2ae0;font-weight:bold;-webkit-text-stroke:0px #2a2ae0">FROM</span><span style="color:#333;font-weight:normal;-webkit-text-stroke:0.25px #333"> BEN</span><span style="color:#ff2020;font-weight:normal;-webkit-text-stroke:0.25px #ff2020">.</span><span style="color:#333;font-weight:normal;-webkit-text-stroke:0.25px #333">CUSTOMER c</span></div>
<div class="t" style="left:381.2px;top:118px;font-size:9.75px;line-height:12px;font-family:'Liberation Mono'"><span style="color:#3333ff;font-weight:bold;-webkit-text-stroke:0px #3333ff">ORDER BY</span><span style="color:#222;font-weight:normal;-webkit-text-stroke:0.25px #222"> first_name</span></div>
<div class="a" style="left:492px;top:117px;width:1px;height:11px;background:#000"></div>
<div class="a" style="left:343px;top:297px;width:660px;height:12px;background:#f0f0f0"></div>
<div class="a" style="left:342px;top:309px;width:662px;height:1px;background:#f8f8f8"></div>
<div class="a" style="left:355px;top:297px;width:268px;height:11px;background:#cdcdcd"></div>
<svg class="a" style="left:345px;top:299px" width="6" height="7" viewBox="0 0 6 7"><path d="M4.5 0.5L1.5 3.5L4.5 6.5" fill="none" stroke="#555" stroke-width="1.4"/></svg>
<svg class="a" style="left:993px;top:299px" width="6" height="7" viewBox="0 0 6 7"><path d="M1.5 0.5L4.5 3.5L1.5 6.5" fill="none" stroke="#555" stroke-width="1.4"/></svg>
<div class="a" style="left:342px;top:313px;width:73px;height:17px;background:#fff;border:1px solid #e2e2e2;border-bottom:none"></div>
<div class="a" style="left:415px;top:314px;width:58px;height:16px;background:#ededed;border:1px solid #dcdcdc;border-bottom:none;border-left:none"></div>
<svg class="a" style="left:346px;top:314px" width="13" height="13" viewBox="0 0 13 13"><path d="M0.8 6.2L5.2 0.8Q6.2 0 7.2 0.8L8.6 2L4 7.8L1.2 8.8Z" fill="#efe9cc" stroke="#8c8a58" stroke-width="0.8"/><path d="M1.2 8.6L0.6 10.2Q1 11.8 2.6 11.6L3.8 10.6" fill="#e6dfb0" stroke="#8c8a58" stroke-width="0.8"/><path d="M4.6 9.6L10.6 2" stroke="#e8902a" stroke-width="2"/><path d="M10.2 1.6L11.2 0.6" stroke="#a05a20" stroke-width="1.6"/><path d="M3.6 11L5 9.2" stroke="#1a1a1a" stroke-width="1.4"/></svg>
<div class="t" style="left:363.47px;top:315px;font-size:9px;line-height:12px;color:#000;font-weight:normal;font-family:'Liberation Sans';transform:scaleX(0.88);transform-origin:0 0;-webkit-text-stroke:0.06px #000;">Resultset # 1</div>
<svg class="a" style="left:419px;top:316px" width="12" height="12" viewBox="0 0 12 12"><rect x="0.5" y="0.5" width="7" height="9" fill="#eef4ee" stroke="#7a8a9a" stroke-width="0.7"/><rect x="4" y="2.5" width="7" height="9" fill="#fff" stroke="#7a8a9a" stroke-width="0.7"/><path d="M5.5 5h4M5.5 7h4M5.5 9h4" stroke="#2a4ad0" stroke-width="0.8"/></svg>
<div class="t" style="left:435.47px;top:316px;font-size:9px;line-height:12px;color:#000;font-weight:normal;font-family:'Liberation Sans';transform:scaleX(0.88);transform-origin:0 0;-webkit-text-stroke:0.06px #000;">Messages</div>
<div class="a" style="left:344px;top:330px;width:657px;height:195px;background:#ababab;border-top:1px solid #3c3c3c;border-left:1px solid #3c3c3c;border-right:1px solid #6e6e6e;border-bottom:1px solid #6e6e6e"></div>
<div class="a" style="left:1001px;top:330px;width:3px;height:197px;background:#fbfbfb"></div>
<div class="a" style="left:340px;top:330px;width:4px;height:197px;background:#fbfbfb"></div>
<div class="a" style="left:340px;top:527px;width:664px;height:1px;background:#e2e2e2"></div>
<div class="a" style="left:336px;top:75px;width:1px;height:455px;background:#fafafa"></div>
<div class="a" style="left:342px;top:525px;width:662px;height:3px;background:#fbfbfb"></div>
<div class="a" style="left:345px;top:331px;width:501px;height:16px;background:#efefef"></div>
<div class="a" style="left:345px;top:331px;width:29px;height:16px;background:#fdfdfd"></div>
<div class="a" style="left:374px;top:331px;width:1px;height:16px;background:#d0d0d0"></div>
<div class="t" style="left:377.60px;top:332px;font-size:8px;line-height:12px;color:#111;font-weight:normal;font-family:'Liberation Mono';-webkit-text-stroke:0.15px #111;">CUSTOMER_ID</div>
<svg class="a" style="left:445px;top:334px" width="9" height="9" viewBox="0 0 9 9"><rect x="0.6" y="0.6" width="7.8" height="7.8" fill="#fafafa" stroke="#111" stroke-width="1.2"/><path d="M2 2L7 7M7 2L2 7" stroke="#777" stroke-width="0.8"/></svg>
<div class="a" style="left:455px;top:331px;width:1px;height:16px;background:#5e7676"></div>
<div class="t" style="left:457.80px;top:332px;font-size:8px;line-height:12px;color:#111;font-weight:normal;font-family:'Liberation Mono';-webkit-text-stroke:0.15px #111;">FIRST_NAME</div>
<svg class="a" style="left:520px;top:334px" width="9" height="9" viewBox="0 0 9 9"><rect x="0.6" y="0.6" width="7.8" height="7.8" fill="#fafafa" stroke="#111" stroke-width="1.2"/><path d="M2 2L7 7M7 2L2 7" stroke="#777" stroke-width="0.8"/></svg>
<div class="a" style="left:530px;top:331px;width:1px;height:16px;background:#5e7676"></div>
<div class="t" style="left:532.80px;top:332px;font-size:8px;line-height:12px;color:#111;font-weight:normal;font-family:'Liberation Mono';-webkit-text-stroke:0.15px #111;">LAST_NAME</div>
<svg class="a" style="left:594px;top:334px" width="9" height="9" viewBox="0 0 9 9"><rect x="0.6" y="0.6" width="7.8" height="7.8" fill="#fafafa" stroke="#111" stroke-width="1.2"/><path d="M2 2L7 7M7 2L2 7" stroke="#777" stroke-width="0.8"/></svg>
<div class="a" style="left:604px;top:331px;width:1px;height:16px;background:#5e7676"></div>
<div class="t" style="left:606.80px;top:332px;font-size:8px;line-height:12px;color:#111;font-weight:normal;font-family:'Liberation Mono';-webkit-text-stroke:0.15px #111;">ADDRESS_STATE</div>
<svg class="a" style="left:684px;top:334px" width="9" height="9" viewBox="0 0 9 9"><rect x="0.6" y="0.6" width="7.8" height="7.8" fill="#fafafa" stroke="#111" stroke-width="1.2"/><path d="M2 2L7 7M7 2L2 7" stroke="#777" stroke-width="0.8"/></svg>
<div class="a" style="left:694px;top:331px;width:1px;height:16px;background:#5e7676"></div>
<div class="t" style="left:696.80px;top:332px;font-size:8px;line-height:12px;color:#111;font-weight:normal;font-family:'Liberation Mono';-webkit-text-stroke:0.15px #111;">EMAIL_ADDRESS</div>
<svg class="a" style="left:836px;top:334px" width="9" height="9" viewBox="0 0 9 9"><rect x="0.6" y="0.6" width="7.8" height="7.8" fill="#fafafa" stroke="#111" stroke-width="1.2"/><path d="M2 2L7 7M7 2L2 7" stroke="#777" stroke-width="0.8"/></svg>
<div class="a" style="left:846px;top:331px;width:1px;height:16px;background:#5e7676"></div>
<svg class="a" style="left:583px;top:334px" width="7" height="6" viewBox="0 0 7 6"><path d="M0.5 0.5h6l-3 5z" fill="#111"/></svg>
<div class="a" style="left:345px;top:346px;width:501px;height:1px;background:#b4c2c4"></div>
<div class="a" style="left:375px;top:347px;width:471px;height:16px;background:#ffffff"></div>
<div class="a" style="left:375px;top:347px;width:80px;height:16px;background:#ffff00"></div>
<div class="a" style="left:345px;top:347px;width:29px;height:16px;background:#efefef"></div>
<div class="a" style="left:345px;top:362px;width:29px;height:1px;background:#5f7676"></div>
<div class="a" style="left:374px;top:347px;width:1px;height:16px;background:#6a8080"></div>
<div class="a" style="left:375px;top:362px;width:471px;height:1px;background:#dcdcdc"></div>
<div class="a" style="left:455px;top:347px;width:1px;height:16px;background:#dcdcdc"></div>
<div class="a" style="left:530px;top:347px;width:1px;height:16px;background:#dcdcdc"></div>
<div class="a" style="left:604px;top:347px;width:1px;height:16px;background:#dcdcdc"></div>
<div class="a" style="left:694px;top:347px;width:1px;height:16px;background:#dcdcdc"></div>
<div class="a" style="left:846px;top:347px;width:1px;height:16px;background:#dcdcdc"></div>
<div class="t" style="left:347.50px;top:349px;font-size:8px;line-height:12px;color:#222;font-weight:normal;font-family:'Liberation Mono';-webkit-text-stroke:0.15px #222;">1</div>
<svg class="a" style="left:377px;top:349px" width="8" height="8" viewBox="0 0 8 8"><path d="M0.5 0.5h7M0.5 0.5v7" stroke="#b0b0b0" stroke-width="0.7"/><path d="M1 4.5h6.5M4.5 1v6.5" stroke="#333" stroke-width="0.8"/><path d="M7.5 0v8M0 7.5h8" stroke="#111" stroke-width="1"/></svg>
<div class="t" style="left:389.50px;top:349px;font-size:8px;line-height:12px;color:#ff1a1a;font-weight:bold;font-family:'Liberation Mono';">6</div>
<div class="t" style="left:457.20px;top:349px;font-size:8px;line-height:12px;color:#222;font-weight:normal;font-family:'Liberation Mono';-webkit-text-stroke:0.15px #222;">Dorothy</div>
<div class="t" style="left:532.20px;top:349px;font-size:8px;line-height:12px;color:#222;font-weight:normal;font-family:'Liberation Mono';-webkit-text-stroke:0.15px #222;">Armstrong</div>
<div class="t" style="left:606.20px;top:349px;font-size:8px;line-height:12px;color:#222;font-weight:normal;font-family:'Liberation Mono';-webkit-text-stroke:0.15px #222;">OR</div>
<div class="t" style="left:696.20px;top:349px;font-size:8px;line-height:12px;color:#222;font-weight:normal;font-family:'Liberation Mono';-webkit-text-stroke:0.15px #222;">abc123@abc.com</div>
<div class="a" style="left:375px;top:363px;width:471px;height:16px;background:#f0f0f0"></div>
<div class="a" style="left:345px;top:363px;width:29px;height:16px;background:#efefef"></div>
<div class="a" style="left:345px;top:378px;width:29px;height:1px;background:#5f7676"></div>
<div class="a" style="left:374px;top:363px;width:1px;height:16px;background:#6a8080"></div>
<div class="a" style="left:375px;top:378px;width:471px;height:1px;background:#dcdcdc"></div>
<div class="a" style="left:455px;top:363px;width:1px;height:16px;background:#dcdcdc"></div>
<div class="a" style="left:530px;top:363px;width:1px;height:16px;background:#dcdcdc"></div>
<div class="a" style="left:604px;top:363px;width:1px;height:16px;background:#dcdcdc"></div>
<div class="a" style="left:694px;top:363px;width:1px;height:16px;background:#dcdcdc"></div>
<div class="a" style="left:846px;top:363px;width:1px;height:16px;background:#dcdcdc"></div>
<div class="t" style="left:347.50px;top:365px;font-size:8px;line-height:12px;color:#222;font-weight:normal;font-family:'Liberation Mono';-webkit-text-stroke:0.15px #222;">2</div>
<svg class="a" style="left:377px;top:365px" width="8" height="8" viewBox="0 0 8 8"><path d="M0.5 0.5h7M0.5 0.5v7" stroke="#b0b0b0" stroke-width="0.7"/><path d="M1 4.5h6.5M4.5 1v6.5" stroke="#333" stroke-width="0.8"/><path d="M7.5 0v8M0 7.5h8" stroke="#111" stroke-width="1"/></svg>
<div class="t" style="left:389.50px;top:365px;font-size:8px;line-height:12px;color:#ff1a1a;font-weight:bold;font-family:'Liberation Mono';">8</div>
<div class="t" style="left:457.20px;top:365px;font-size:8px;line-height:12px;color:#222;font-weight:normal;font-family:'Liberation Mono';-webkit-text-stroke:0.15px #222;">Joseph</div>
<div class="t" style="left:532.20px;top:365px;font-size:8px;line-height:12px;color:#222;font-weight:normal;font-family:'Liberation Mono';-webkit-text-stroke:0.15px #222;">Bell</div>
<div class="t" style="left:606.20px;top:365px;font-size:8px;line-height:12px;color:#222;font-weight:normal;font-family:'Liberation Mono';-webkit-text-stroke:0.15px #222;">FL</div>
<div class="t" style="left:696.20px;top:365px;font-size:8px;line-height:12px;color:#222;font-weight:normal;font-family:'Liberation Mono';-webkit-text-stroke:0.15px #222;">jbell@comm.edu</div>
<div class="a" style="left:375px;top:379px;width:471px;height:17px;background:#ffffff"></div>
<div class="a" style="left:345px;top:379px;width:29px;height:17px;background:#efefef"></div>
<div class="a" style="left:345px;top:395px;width:29px;height:1px;background:#5f7676"></div>
<div class="a" style="left:374px;top:379px;width:1px;height:17px;background:#6a8080"></div>
<div class="a" style="left:375px;top:395px;width:471px;height:1px;background:#dcdcdc"></div>
<div class="a" style="left:455px;top:379px;width:1px;height:17px;background:#dcdcdc"></div>
<div class="a" style="left:530px;top:379px;width:1px;height:17px;background:#dcdcdc"></div>
<div class="a" style="left:604px;top:379px;width:1px;height:17px;background:#dcdcdc"></div>
<div class="a" style="left:694px;top:379px;width:1px;height:17px;background:#dcdcdc"></div>
<div class="a" style="left:846px;top:379px;width:1px;height:17px;background:#dcdcdc"></div>
<div class="t" style="left:347.50px;top:381px;font-size:8px;line-height:12px;color:#222;font-weight:normal;font-family:'Liberation Mono';-webkit-text-stroke:0.15px #222;">3</div>
<svg class="a" style="left:377px;top:381px" width="8" height="8" viewBox="0 0 8 8"><path d="M0.5 0.5h7M0.5 0.5v7" stroke="#b0b0b0" stroke-width="0.7"/><path d="M1 4.5h6.5M4.5 1v6.5" stroke="#333" stroke-width="0.8"/><path d="M7.5 0v8M0 7.5h8" stroke="#111" stroke-width="1"/></svg>
<div class="t" style="left:389.50px;top:381px;font-size:8px;line-height:12px;color:#ff1a1a;font-weight:bold;font-family:'Liberation Mono';">1</div>
<div class="t" style="left:457.20px;top:381px;font-size:8px;line-height:12px;color:#222;font-weight:normal;font-family:'Liberation Mono';-webkit-text-stroke:0.15px #222;">Teresa B</div>
<div class="t" style="left:532.20px;top:381px;font-size:8px;line-height:12px;color:#222;font-weight:normal;font-family:'Liberation Mono';-webkit-text-stroke:0.15px #222;">Hudson</div>
<div class="t" style="left:606.20px;top:381px;font-size:8px;line-height:12px;color:#222;font-weight:normal;font-family:'Liberation Mono';-webkit-text-stroke:0.15px #222;">NY</div>
<div class="t" style="left:696.20px;top:381px;font-size:8px;line-height:12px;color:#222;font-weight:normal;font-family:'Liberation Mono';-webkit-text-stroke:0.15px #222;">thudson@abc.com</div>
<div class="a" style="left:375px;top:396px;width:471px;height:16px;background:#f0f0f0"></div>
<div class="a" style="left:345px;top:396px;width:29px;height:16px;background:#efefef"></div>
<div class="a" style="left:345px;top:411px;width:29px;height:1px;background:#5f7676"></div>
<div class="a" style="left:374px;top:396px;width:1px;height:16px;background:#6a8080"></div>
<div class="a" style="left:375px;top:411px;width:471px;height:1px;background:#dcdcdc"></div>
<div class="a" style="left:455px;top:396px;width:1px;height:16px;background:#dcdcdc"></div>
<div class="a" style="left:530px;top:396px;width:1px;height:16px;background:#dcdcdc"></div>
<div class="a" style="left:604px;top:396px;width:1px;height:16px;background:#dcdcdc"></div>
<div class="a" style="left:694px;top:396px;width:1px;height:16px;background:#dcdcdc"></div>
<div class="a" style="left:846px;top:396px;width:1px;height:16px;background:#dcdcdc"></div>
<div class="t" style="left:347.50px;top:398px;font-size:8px;line-height:12px;color:#222;font-weight:normal;font-family:'Liberation Mono';-webkit-text-stroke:0.15px #222;">4</div>
<svg class="a" style="left:377px;top:398px" width="8" height="8" viewBox="0 0 8 8"><path d="M0.5 0.5h7M0.5 0.5v7" stroke="#b0b0b0" stroke-width="0.7"/><path d="M1 4.5h6.5M4.5 1v6.5" stroke="#333" stroke-width="0.8"/><path d="M7.5 0v8M0 7.5h8" stroke="#111" stroke-width="1"/></svg>
<div class="t" style="left:389.50px;top:398px;font-size:8px;line-height:12px;color:#ff1a1a;font-weight:bold;font-family:'Liberation Mono';">3</div>
<div class="t" style="left:457.20px;top:398px;font-size:8px;line-height:12px;color:#222;font-weight:normal;font-family:'Liberation Mono';-webkit-text-stroke:0.15px #222;">Lois</div>
<div class="t" style="left:532.20px;top:398px;font-size:8px;line-height:12px;color:#222;font-weight:normal;font-family:'Liberation Mono';-webkit-text-stroke:0.15px #222;">Lawson</div>
<div class="t" style="left:606.20px;top:398px;font-size:8px;line-height:12px;color:#222;font-weight:normal;font-family:'Liberation Mono';-webkit-text-stroke:0.15px #222;">OR</div>
<div class="t" style="left:696.20px;top:398px;font-size:8px;line-height:12px;color:#222;font-weight:normal;font-family:'Liberation Mono';-webkit-text-stroke:0.15px #222;">lois_law@outlook.com</div>
<div class="a" style="left:375px;top:412px;width:471px;height:16px;background:#ffffff"></div>
<div class="a" style="left:345px;top:412px;width:29px;height:16px;background:#efefef"></div>
<div class="a" style="left:345px;top:427px;width:29px;height:1px;background:#5f7676"></div>
<div class="a" style="left:374px;top:412px;width:1px;height:16px;background:#6a8080"></div>
<div class="a" style="left:375px;top:427px;width:471px;height:1px;background:#dcdcdc"></div>
<div class="a" style="left:455px;top:412px;width:1px;height:16px;background:#dcdcdc"></div>
<div class="a" style="left:530px;top:412px;width:1px;height:16px;background:#dcdcdc"></div>
<div class="a" style="left:604px;top:412px;width:1px;height:16px;background:#dcdcdc"></div>
<div class="a" style="left:694px;top:412px;width:1px;height:16px;background:#dcdcdc"></div>
<div class="a" style="left:846px;top:412px;width:1px;height:16px;background:#dcdcdc"></div>
<div class="t" style="left:347.50px;top:414px;font-size:8px;line-height:12px;color:#222;font-weight:normal;font-family:'Liberation Mono';-webkit-text-stroke:0.15px #222;">5</div>
<svg class="a" style="left:377px;top:414px" width="8" height="8" viewBox="0 0 8 8"><path d="M0.5 0.5h7M0.5 0.5v7" stroke="#b0b0b0" stroke-width="0.7"/><path d="M1 4.5h6.5M4.5 1v6.5" stroke="#333" stroke-width="0.8"/><path d="M7.5 0v8M0 7.5h8" stroke="#111" stroke-width="1"/></svg>
<div class="t" style="left:389.50px;top:414px;font-size:8px;line-height:12px;color:#ff1a1a;font-weight:bold;font-family:'Liberation Mono';">9</div>
<div class="t" style="left:457.20px;top:414px;font-size:8px;line-height:12px;color:#222;font-weight:normal;font-family:'Liberation Mono';-webkit-text-stroke:0.15px #222;">Lois</div>
<div class="t" style="left:532.20px;top:414px;font-size:8px;line-height:12px;color:#222;font-weight:normal;font-family:'Liberation Mono';-webkit-text-stroke:0.15px #222;">Martinez</div>
<div class="t" style="left:606.20px;top:414px;font-size:8px;line-height:12px;color:#222;font-weight:normal;font-family:'Liberation Mono';-webkit-text-stroke:0.15px #222;">CALIF</div>
<div class="t" style="left:696.20px;top:414px;font-size:8px;line-height:12px;color:#222;font-weight:normal;font-family:'Liberation Mono';-webkit-text-stroke:0.15px #222;">loismar@awe.com</div>
<div class="a" style="left:375px;top:428px;width:471px;height:16px;background:#f0f0f0"></div>
<div class="a" style="left:345px;top:428px;width:29px;height:16px;background:#efefef"></div>
<div class="a" style="left:345px;top:443px;width:29px;height:1px;background:#5f7676"></div>
<div class="a" style="left:374px;top:428px;width:1px;height:16px;background:#6a8080"></div>
<div class="a" style="left:375px;top:443px;width:471px;height:1px;background:#dcdcdc"></div>
<div class="a" style="left:455px;top:428px;width:1px;height:16px;background:#dcdcdc"></div>
<div class="a" style="left:530px;top:428px;width:1px;height:16px;background:#dcdcdc"></div>
<div class="a" style="left:604px;top:428px;width:1px;height:16px;background:#dcdcdc"></div>
<div class="a" style="left:694px;top:428px;width:1px;height:16px;background:#dcdcdc"></div>
<div class="a" style="left:846px;top:428px;width:1px;height:16px;background:#dcdcdc"></div>
<div class="t" style="left:347.50px;top:430px;font-size:8px;line-height:12px;color:#222;font-weight:normal;font-family:'Liberation Mono';-webkit-text-stroke:0.15px #222;">6</div>
<svg class="a" style="left:377px;top:430px" width="8" height="8" viewBox="0 0 8 8"><path d="M0.5 0.5h7M0.5 0.5v7" stroke="#b0b0b0" stroke-width="0.7"/><path d="M1 4.5h6.5M4.5 1v6.5" stroke="#333" stroke-width="0.8"/><path d="M7.5 0v8M0 7.5h8" stroke="#111" stroke-width="1"/></svg>
<div class="t" style="left:389.50px;top:430px;font-size:8px;line-height:12px;color:#ff1a1a;font-weight:bold;font-family:'Liberation Mono';">2</div>
<div class="t" style="left:457.20px;top:430px;font-size:8px;line-height:12px;color:#222;font-weight:normal;font-family:'Liberation Mono';-webkit-text-stroke:0.15px #222;">Fred S</div>
<div class="t" style="left:532.20px;top:430px;font-size:8px;line-height:12px;color:#222;font-weight:normal;font-family:'Liberation Mono';-webkit-text-stroke:0.15px #222;">Montgomery</div>
<div class="t" style="left:606.20px;top:430px;font-size:8px;line-height:12px;color:#222;font-weight:normal;font-family:'Liberation Mono';-webkit-text-stroke:0.15px #222;">CA</div>
<div class="t" style="left:696.20px;top:430px;font-size:8px;line-height:12px;color:#222;font-weight:normal;font-family:'Liberation Mono';-webkit-text-stroke:0.15px #222;">fmont@gmail.com</div>
<div class="a" style="left:375px;top:444px;width:471px;height:17px;background:#ffffff"></div>
<div class="a" style="left:345px;top:444px;width:29px;height:17px;background:#efefef"></div>
<div class="a" style="left:345px;top:460px;width:29px;height:1px;background:#5f7676"></div>
<div class="a" style="left:374px;top:444px;width:1px;height:17px;background:#6a8080"></div>
<div class="a" style="left:375px;top:460px;width:471px;height:1px;background:#dcdcdc"></div>
<div class="a" style="left:455px;top:444px;width:1px;height:17px;background:#dcdcdc"></div>
<div class="a" style="left:530px;top:444px;width:1px;height:17px;background:#dcdcdc"></div>
<div class="a" style="left:604px;top:444px;width:1px;height:17px;background:#dcdcdc"></div>
<div class="a" style="left:694px;top:444px;width:1px;height:17px;background:#dcdcdc"></div>
<div class="a" style="left:846px;top:444px;width:1px;height:17px;background:#dcdcdc"></div>
<div class="t" style="left:347.50px;top:446px;font-size:8px;line-height:12px;color:#222;font-weight:normal;font-family:'Liberation Mono';-webkit-text-stroke:0.15px #222;">7</div>
<svg class="a" style="left:377px;top:446px" width="8" height="8" viewBox="0 0 8 8"><path d="M0.5 0.5h7M0.5 0.5v7" stroke="#b0b0b0" stroke-width="0.7"/><path d="M1 4.5h6.5M4.5 1v6.5" stroke="#333" stroke-width="0.8"/><path d="M7.5 0v8M0 7.5h8" stroke="#111" stroke-width="1"/></svg>
<div class="t" style="left:389.50px;top:446px;font-size:8px;line-height:12px;color:#ff1a1a;font-weight:bold;font-family:'Liberation Mono';">5</div>
<div class="t" style="left:457.20px;top:446px;font-size:8px;line-height:12px;color:#222;font-weight:normal;font-family:'Liberation Mono';-webkit-text-stroke:0.15px #222;">Ralph</div>
<div class="t" style="left:532.20px;top:446px;font-size:8px;line-height:12px;color:#222;font-weight:normal;font-family:'Liberation Mono';-webkit-text-stroke:0.15px #222;">Montgomery</div>
<div class="t" style="left:606.20px;top:446px;font-size:8px;line-height:12px;color:#222;font-weight:normal;font-family:'Liberation Mono';-webkit-text-stroke:0.15px #222;">TX</div>
<div class="t" style="left:696.20px;top:446px;font-size:8px;line-height:12px;color:#222;font-weight:normal;font-family:'Liberation Mono';-webkit-text-stroke:0.15px #222;">ralph_mont25@gmail.com</div>
<div class="a" style="left:375px;top:461px;width:471px;height:16px;background:#f0f0f0"></div>
<div class="a" style="left:345px;top:461px;width:29px;height:16px;background:#efefef"></div>
<div class="a" style="left:345px;top:476px;width:29px;height:1px;background:#5f7676"></div>
<div class="a" style="left:374px;top:461px;width:1px;height:16px;background:#6a8080"></div>
<div class="a" style="left:375px;top:476px;width:471px;height:1px;background:#dcdcdc"></div>
<div class="a" style="left:455px;top:461px;width:1px;height:16px;background:#dcdcdc"></div>
<div class="a" style="left:530px;top:461px;width:1px;height:16px;background:#dcdcdc"></div>
<div class="a" style="left:604px;top:461px;width:1px;height:16px;background:#dcdcdc"></div>
<div class="a" style="left:694px;top:461px;width:1px;height:16px;background:#dcdcdc"></div>
<div class="a" style="left:846px;top:461px;width:1px;height:16px;background:#dcdcdc"></div>
<div class="t" style="left:347.50px;top:463px;font-size:8px;line-height:12px;color:#222;font-weight:normal;font-family:'Liberation Mono';-webkit-text-stroke:0.15px #222;">8</div>
<svg class="a" style="left:377px;top:463px" width="8" height="8" viewBox="0 0 8 8"><path d="M0.5 0.5h7M0.5 0.5v7" stroke="#b0b0b0" stroke-width="0.7"/><path d="M1 4.5h6.5M4.5 1v6.5" stroke="#333" stroke-width="0.8"/><path d="M7.5 0v8M0 7.5h8" stroke="#111" stroke-width="1"/></svg>
<div class="t" style="left:389.50px;top:463px;font-size:8px;line-height:12px;color:#ff1a1a;font-weight:bold;font-family:'Liberation Mono';">4</div>
<div class="t" style="left:457.20px;top:463px;font-size:8px;line-height:12px;color:#222;font-weight:normal;font-family:'Liberation Mono';-webkit-text-stroke:0.15px #222;">Alice</div>
<div class="t" style="left:532.20px;top:463px;font-size:8px;line-height:12px;color:#222;font-weight:normal;font-family:'Liberation Mono';-webkit-text-stroke:0.15px #222;">Perry</div>
<div class="t" style="left:606.20px;top:463px;font-size:8px;line-height:12px;color:#222;font-weight:normal;font-family:'Liberation Mono';-webkit-text-stroke:0.15px #222;">SC</div>
<div class="t" style="left:696.20px;top:463px;font-size:8px;line-height:12px;color:#222;font-weight:normal;font-family:'Liberation Mono';-webkit-text-stroke:0.15px #222;">aliceperry</div>
<div class="a" style="left:375px;top:477px;width:471px;height:16px;background:#ffffff"></div>
<div class="a" style="left:345px;top:477px;width:29px;height:16px;background:#efefef"></div>
<div class="a" style="left:345px;top:492px;width:29px;height:1px;background:#5f7676"></div>
<div class="a" style="left:374px;top:477px;width:1px;height:16px;background:#6a8080"></div>
<div class="a" style="left:375px;top:492px;width:471px;height:1px;background:#dcdcdc"></div>
<div class="a" style="left:455px;top:477px;width:1px;height:16px;background:#dcdcdc"></div>
<div class="a" style="left:530px;top:477px;width:1px;height:16px;background:#dcdcdc"></div>
<div class="a" style="left:604px;top:477px;width:1px;height:16px;background:#dcdcdc"></div>
<div class="a" style="left:694px;top:477px;width:1px;height:16px;background:#dcdcdc"></div>
<div class="a" style="left:846px;top:477px;width:1px;height:16px;background:#dcdcdc"></div>
<div class="t" style="left:347.50px;top:479px;font-size:8px;line-height:12px;color:#222;font-weight:normal;font-family:'Liberation Mono';-webkit-text-stroke:0.15px #222;">9</div>
<svg class="a" style="left:377px;top:479px" width="8" height="8" viewBox="0 0 8 8"><path d="M0.5 0.5h7M0.5 0.5v7" stroke="#b0b0b0" stroke-width="0.7"/><path d="M1 4.5h6.5M4.5 1v6.5" stroke="#333" stroke-width="0.8"/><path d="M7.5 0v8M0 7.5h8" stroke="#111" stroke-width="1"/></svg>
<div class="t" style="left:389.50px;top:479px;font-size:8px;line-height:12px;color:#ff1a1a;font-weight:bold;font-family:'Liberation Mono';">10</div>
<div class="t" style="left:457.20px;top:479px;font-size:8px;line-height:12px;color:#222;font-weight:normal;font-family:'Liberation Mono';-webkit-text-stroke:0.15px #222;">Robert</div>
<div class="t" style="left:532.20px;top:479px;font-size:8px;line-height:12px;color:#222;font-weight:normal;font-family:'Liberation Mono';-webkit-text-stroke:0.15px #222;">Rice</div>
<div class="t" style="left:606.20px;top:479px;font-size:8px;line-height:12px;color:#222;font-weight:normal;font-family:'Liberation Mono';-webkit-text-stroke:0.15px #222;">IN</div>
<div class="t" style="left:696.20px;top:479px;font-size:8px;line-height:12px;color:#222;font-weight:normal;font-family:'Liberation Mono';-webkit-text-stroke:0.15px #222;">robrice123</div>
<div class="a" style="left:375px;top:493px;width:471px;height:16px;background:#f0f0f0"></div>
<div class="a" style="left:345px;top:493px;width:29px;height:16px;background:#efefef"></div>
<div class="a" style="left:345px;top:508px;width:29px;height:1px;background:#5f7676"></div>
<div class="a" style="left:374px;top:493px;width:1px;height:16px;background:#6a8080"></div>
<div class="a" style="left:375px;top:508px;width:471px;height:1px;background:#dcdcdc"></div>
<div class="a" style="left:455px;top:493px;width:1px;height:16px;background:#dcdcdc"></div>
<div class="a" style="left:530px;top:493px;width:1px;height:16px;background:#dcdcdc"></div>
<div class="a" style="left:604px;top:493px;width:1px;height:16px;background:#dcdcdc"></div>
<div class="a" style="left:694px;top:493px;width:1px;height:16px;background:#dcdcdc"></div>
<div class="a" style="left:846px;top:493px;width:1px;height:16px;background:#dcdcdc"></div>
<div class="t" style="left:347.50px;top:495px;font-size:8px;line-height:12px;color:#222;font-weight:normal;font-family:'Liberation Mono';-webkit-text-stroke:0.15px #222;">10</div>
<svg class="a" style="left:377px;top:495px" width="8" height="8" viewBox="0 0 8 8"><path d="M0.5 0.5h7M0.5 0.5v7" stroke="#b0b0b0" stroke-width="0.7"/><path d="M1 4.5h6.5M4.5 1v6.5" stroke="#333" stroke-width="0.8"/><path d="M7.5 0v8M0 7.5h8" stroke="#111" stroke-width="1"/></svg>
<div class="t" style="left:389.50px;top:495px;font-size:8px;line-height:12px;color:#ff1a1a;font-weight:bold;font-family:'Liberation Mono';">7</div>
<div class="t" style="left:457.20px;top:495px;font-size:8px;line-height:12px;color:#222;font-weight:normal;font-family:'Liberation Mono';-webkit-text-stroke:0.15px #222;">Fred</div>
<div class="t" style="left:532.20px;top:495px;font-size:8px;line-height:12px;color:#222;font-weight:normal;font-family:'Liberation Mono';-webkit-text-stroke:0.15px #222;">Wallace</div>
<div class="t" style="left:606.20px;top:495px;font-size:8px;line-height:12px;color:#222;font-weight:normal;font-family:'Liberation Mono';-webkit-text-stroke:0.15px #222;">NY</div>
<div class="t" style="left:696.20px;top:495px;font-size:8px;line-height:12px;color:#222;font-weight:normal;font-family:'Liberation Mono';-webkit-text-stroke:0.15px #222;">wallacef@testwebsite.co.uk</div>
<div class="t" style="left:11.45px;top:534px;font-size:9px;line-height:12px;color:#000;font-weight:normal;font-family:'Liberation Sans';transform:scaleX(0.92);transform-origin:0 0;-webkit-text-stroke:0.06px #000;">Line 3, Pos 19</div>
<div class="a" style="left:76px;top:533px;width:1px;height:13px;background:#c6c6c6"></div>
<div class="t" style="left:81.24px;top:534px;font-size:9px;line-height:12px;color:#000;font-weight:normal;font-family:'Liberation Sans';transform:scaleX(0.94);transform-origin:0 0;-webkit-text-stroke:0.06px #000;">Oracle DSN (Oracle)</div>
<div class="a" style="left:163px;top:533px;width:1px;height:13px;background:#c6c6c6"></div>
<svg class="a" style="left:168px;top:535px" width="8" height="8" viewBox="0 0 8 8"><circle cx="4" cy="4" r="3.2" fill="#1ec81e"/><circle cx="3.2" cy="3.2" r="1.2" fill="#8af08a"/></svg>
<div class="a" style="left:179px;top:533px;width:1px;height:13px;background:#c6c6c6"></div>
<svg class="a" style="left:182px;top:532px" width="14" height="14" viewBox="0 0 14 14"><rect x="0.5" y="0.5" width="12.5" height="12.5" rx="1.5" fill="#2fbf2f" stroke="#1a8a1a"/><text x="6.8" y="10.3" font-family="Liberation Sans" font-size="9.5" font-weight="bold" fill="#fff" text-anchor="middle">C</text></svg>
<div class="a" style="left:197px;top:533px;width:1px;height:13px;background:#c6c6c6"></div>
<div class="t" style="left:202.25px;top:534px;font-size:9px;line-height:12px;color:#000;font-weight:normal;font-family:'Liberation Sans';transform:scaleX(0.92);transform-origin:0 0;-webkit-text-stroke:0.06px #000;">Test SQL.sql32</div>
<div class="a" style="left:261px;top:533px;width:1px;height:13px;background:#c6c6c6"></div>
<div class="a" style="left:265px;top:532px;width:74px;height:13px;background:#e6e6e6;border:1px solid #cfcfcf"></div>
<div class="a" style="left:341px;top:533px;width:1px;height:13px;background:#c6c6c6"></div>
<div class="t" style="left:345.73px;top:534px;font-size:9px;line-height:12px;color:#000;font-weight:normal;font-family:'Liberation Sans';transform:scaleX(0.957);transform-origin:0 0;-webkit-text-stroke:0.06px #000;">Execution time: 00:00.094</div>
</body></html>
